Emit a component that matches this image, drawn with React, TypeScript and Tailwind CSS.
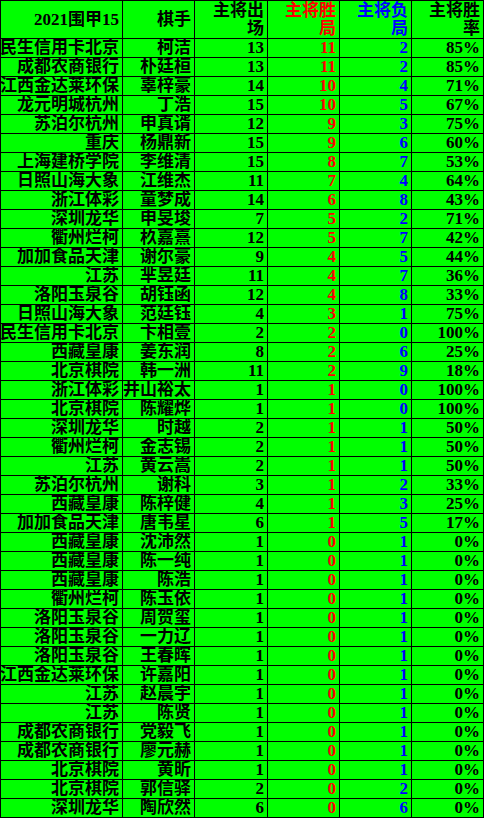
const rows: [string, string, number, number, number, string][] = [
  ["民生信用卡北京", "柯洁", 13, 11, 2, "85%"],
  ["成都农商银行", "朴廷桓", 13, 11, 2, "85%"],
  ["江西金达莱环保", "辜梓豪", 14, 10, 4, "71%"],
  ["龙元明城杭州", "丁浩", 15, 10, 5, "67%"],
  ["苏泊尔杭州", "申真谞", 12, 9, 3, "75%"],
  ["重庆", "杨鼎新", 15, 9, 6, "60%"],
  ["上海建桥学院", "李维清", 15, 8, 7, "53%"],
  ["日照山海大象", "江维杰", 11, 7, 4, "64%"],
  ["浙江体彩", "童梦成", 14, 6, 8, "43%"],
  ["深圳龙华", "申旻埈", 7, 5, 2, "71%"],
  ["衢州烂柯", "杦嘉熹", 12, 5, 7, "42%"],
  ["加加食品天津", "谢尔豪", 9, 4, 5, "44%"],
  ["江苏", "芈昱廷", 11, 4, 7, "36%"],
  ["洛阳玉泉谷", "胡钰函", 12, 4, 8, "33%"],
  ["日照山海大象", "范廷钰", 4, 3, 1, "75%"],
  ["民生信用卡北京", "卞相壹", 2, 2, 0, "100%"],
  ["西藏皇康", "姜东润", 8, 2, 6, "25%"],
  ["北京棋院", "韩一洲", 11, 2, 9, "18%"],
  ["浙江体彩", "井山裕太", 1, 1, 0, "100%"],
  ["北京棋院", "陈耀烨", 1, 1, 0, "100%"],
  ["深圳龙华", "时越", 2, 1, 1, "50%"],
  ["衢州烂柯", "金志锡", 2, 1, 1, "50%"],
  ["江苏", "黄云嵩", 2, 1, 1, "50%"],
  ["苏泊尔杭州", "谢科", 3, 1, 2, "33%"],
  ["西藏皇康", "陈梓健", 4, 1, 3, "25%"],
  ["加加食品天津", "唐韦星", 6, 1, 5, "17%"],
  ["西藏皇康", "沈沛然", 1, 0, 1, "0%"],
  ["西藏皇康", "陈一纯", 1, 0, 1, "0%"],
  ["西藏皇康", "陈浩", 1, 0, 1, "0%"],
  ["衢州烂柯", "陈玉依", 1, 0, 1, "0%"],
  ["洛阳玉泉谷", "周贺玺", 1, 0, 1, "0%"],
  ["洛阳玉泉谷", "一力辽", 1, 0, 1, "0%"],
  ["洛阳玉泉谷", "王春晖", 1, 0, 1, "0%"],
  ["江西金达莱环保", "许嘉阳", 1, 0, 1, "0%"],
  ["江苏", "赵晨宇", 1, 0, 1, "0%"],
  ["江苏", "陈贤", 1, 0, 1, "0%"],
  ["成都农商银行", "党毅飞", 1, 0, 1, "0%"],
  ["成都农商银行", "廖元赫", 1, 0, 1, "0%"],
  ["北京棋院", "黄昕", 1, 0, 1, "0%"],
  ["北京棋院", "郭信驿", 2, 0, 2, "0%"],
  ["深圳龙华", "陶欣然", 6, 0, 6, "0%"],
];

const cols = "grid grid-cols-[122px_72px_73px_72px_72px_72px]";
const cell =
  "flex items-center justify-end overflow-hidden whitespace-nowrap border-r border-black pr-[3px]";

export default function App() {
  return (
    <div
      className="w-[484px] border-l border-t border-black bg-[#00ff00] text-[17px] font-bold text-black"
      style={{ fontFamily: '"Liberation Serif", "Noto Sans CJK SC", serif' }}
    >
      <div className={`${cols} h-[38px] border-b border-black text-right leading-[18px]`}>
        <div className={cell}>2021围甲15</div>
        <div className={cell}>棋手</div>
        <div className={cell}>
          <span>主将出<br />场</span>
        </div>
        <div className={`${cell} text-[#ff0000]`}>
          <span>主将胜<br />局</span>
        </div>
        <div className={`${cell} text-[#0000ff]`}>
          <span>主将负<br />局</span>
        </div>
        <div className={cell}>
          <span>主将胜<br />率</span>
        </div>
      </div>
      {rows.map(([team, player, games, wins, losses, rate], i) => (
        <div key={i} className={`${cols} h-[19px] border-b border-black leading-[18px]`}>
          <div className={cell}>{team}</div>
          <div className={cell}>{player}</div>
          <div className={cell}>{games}</div>
          <div className={`${cell} text-[#ff0000]`}>{wins}</div>
          <div className={`${cell} text-[#0000ff]`}>{losses}</div>
          <div className={cell}>{rate}</div>
        </div>
      ))}
    </div>
  );
}
